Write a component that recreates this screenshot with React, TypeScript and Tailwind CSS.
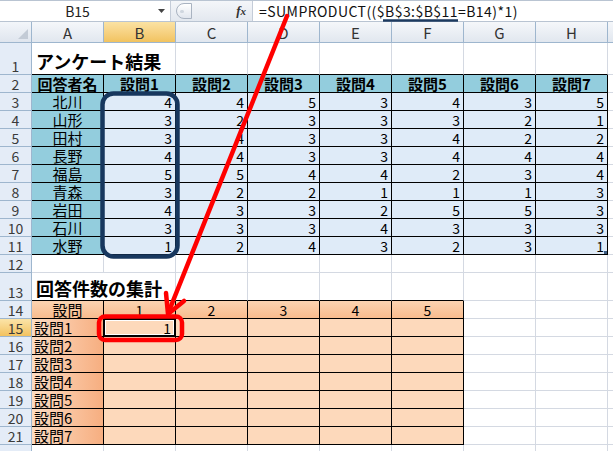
import React from "react";

const FONT = { fontFamily: "'Noto Sans CJK JP', 'Noto Sans', sans-serif" };

const grid = "border-[#d4d9e2]";
const COLS = ["A", "B", "C", "D", "E", "F", "G", "H"];

const data: [string, number[]][] = [
  ["北川", [4, 4, 5, 3, 4, 3, 5]],
  ["山形", [3, 2, 3, 3, 3, 2, 1]],
  ["田村", [3, 4, 3, 3, 4, 2, 2]],
  ["長野", [4, 4, 3, 3, 4, 4, 4]],
  ["福島", [5, 5, 4, 4, 2, 3, 4]],
  ["青森", [3, 2, 2, 1, 1, 1, 3]],
  ["岩田", [4, 3, 3, 2, 5, 5, 3]],
  ["石川", [3, 3, 3, 4, 3, 3, 3]],
  ["水野", [1, 2, 4, 3, 2, 3, 1]],
];

function RowHead({ n, h, sel }: { n: number; h: string; sel?: boolean }) {
  return (
    <div
      className={`w-[32px] shrink-0 ${h} border-r border-b border-[#9eb6ce] flex items-end justify-center pb-[1px] text-[14px] leading-none text-[#3a3a3a] ${
        sel ? "bg-linear-to-b from-[#fbe4a8] to-[#f3c25e]" : "bg-[#e4ecf7]"
      }`}
    >
      {n}
    </div>
  );
}

function Row({ children, h }: { children: React.ReactNode; h: string }) {
  return <div className={`flex ${h}`}>{children}</div>;
}

function Empty({ b }: { b?: string }) {
  return <div className={`w-[72px] shrink-0 border-r border-b ${grid} ${b ?? ""}`} />;
}

function Rest() {
  return <div className={`flex-1 border-b ${grid}`} />;
}

export default function App() {
  return (
    <div className="relative w-[613px] h-[451px] overflow-hidden bg-white" style={FONT}>
      {/* formula bar */}
      <div className="flex h-[22px] border-t border-b border-[#b9c4d2] bg-white">
        <div className="w-[170px] flex items-center">
          <div className="w-[155px] text-center text-[14px] leading-none text-[#222]">B15</div>
          <svg width="9" height="6" viewBox="0 0 9 6" className="ml-[2px]">
            <path d="M1 1 L8 1 L4.5 5 Z" fill="#444" />
          </svg>
        </div>
        <div className="w-[82px] flex items-center bg-linear-to-b from-[#f4f6f9] to-[#e3e8ef] border-l border-[#c4ccd8]">
          <div className="ml-[5px] w-[16px] h-[16px] rounded-l-full border border-[#a9b3c1] bg-linear-to-b from-white to-[#e1e6ee] flex items-center justify-start pl-[3px]">
            <div className="w-[4px] h-[3px] rounded-full bg-[#cfd6df]" />
          </div>
          <div className="ml-auto mr-[6px] text-[13px] italic font-bold text-[#333]" style={{ fontFamily: "'Liberation Serif', serif" }}>
            f<span className="text-[11px]">x</span>
          </div>
        </div>
        <div className="flex-1 flex items-center border-l border-[#c4ccd8] pl-[6px] text-[14px] leading-none text-[#111] tracking-[0.45px]">
          =SUMPRODUCT(($B$3:$B$11=B14)*1)
        </div>
      </div>

      {/* column headers */}
      <div className="flex h-[21px]">
        <div className="w-[32px] shrink-0 border-r border-b border-[#9eb6ce] bg-linear-to-b from-[#f3f6fa] to-[#dfe5ee] relative">
          <svg width="10" height="10" className="absolute right-[3px] bottom-[3px]">
            <path d="M10 0 L10 10 L0 10 Z" fill="#c3cbd6" />
          </svg>
        </div>
        {COLS.map((c) => (
          <div
            key={c}
            className={`w-[72px] shrink-0 border-r border-b border-[#9eb6ce] flex items-center justify-center text-[15px] leading-none text-[#333] ${
              c === "B" ? "bg-linear-to-b from-[#fbe2a3] to-[#f2c35f]" : "bg-linear-to-b from-[#f5f7fa] to-[#e1e7ef]"
            }`}
          >
            {c}
          </div>
        ))}
        <div className="flex-1 border-b border-[#9eb6ce] bg-linear-to-b from-[#f5f7fa] to-[#e1e7ef]" />
      </div>

      {/* row 1 */}
      <Row h="h-[32px]">
        <RowHead n={1} h="h-[32px]" />
        <div className="w-[144px] shrink-0 border-r border-b border-r-[#d4d9e2] border-b-black flex items-end pl-[4px] pb-[4px] text-[18px] font-bold leading-none text-black whitespace-nowrap">
          アンケート結果
        </div>
        {COLS.slice(2).map((c) => (
          <Empty key={c} b="border-b-black" />
        ))}
        <Rest />
      </Row>

      {/* row 2 header */}
      <Row h="h-[18px]">
        <RowHead n={2} h="h-[18px]" />
        <div className="w-[72px] shrink-0 border-r border-b border-black bg-[#93cddd] flex items-center justify-center text-[15px] font-bold leading-none">
          回答者名
        </div>
        {[1, 2, 3, 4, 5, 6, 7].map((i) => (
          <div
            key={i}
            className="w-[72px] shrink-0 border-r border-b border-black bg-[#93cddd] flex items-center justify-center text-[15px] font-bold leading-none"
          >
            設問{i}
          </div>
        ))}
        <Rest />
      </Row>

      {data.map(([name, vals], r) => (
        <Row key={name} h="h-[18px]">
          <RowHead n={r + 3} h="h-[18px]" />
          <div className="w-[72px] shrink-0 border-r border-b border-black bg-[#93cddd] flex items-center justify-center text-[15px] leading-none">
            {name}
          </div>
          {vals.map((v, i) => (
            <div
              key={i}
              className="relative w-[72px] shrink-0 border-r border-b border-black bg-[#dfebf8] flex items-center justify-end pr-[3px] text-[14px] leading-none"
            >
              {v}
              {r === 8 && i === 6 && <div className="absolute right-0 bottom-0 w-[3px] h-[3px] bg-[#3b5a80]" />}
            </div>
          ))}
          <Rest />
        </Row>
      ))}

      {/* row 12 */}
      <Row h="h-[18px]">
        <RowHead n={12} h="h-[18px]" />
        {COLS.map((c) => (
          <Empty key={c} />
        ))}
        <Rest />
      </Row>

      {/* row 13 */}
      <Row h="h-[28px]">
        <RowHead n={13} h="h-[28px]" />
        <div className="w-[144px] shrink-0 border-r border-b border-r-[#d4d9e2] border-b-black flex items-end pl-[4px] pb-[3px] text-[18px] font-bold leading-none text-black whitespace-nowrap">
          回答件数の集計
        </div>
        {COLS.slice(2).map((c, i) => (
          <Empty key={c} b={i < 4 ? "border-b-black" : ""} />
        ))}
        <Rest />
      </Row>

      {/* row 14 */}
      <Row h="h-[18px]">
        <RowHead n={14} h="h-[18px]" />
        <div className="w-[72px] shrink-0 border-r border-b border-black bg-linear-to-b from-[#fbd3b1] to-[#f8bc8e] flex items-center justify-center text-[15px] leading-none">
          設問
        </div>
        {[1, 2, 3, 4, 5].map((i) => (
          <div
            key={i}
            className="w-[72px] shrink-0 border-r border-b border-black bg-linear-to-b from-[#fbd3b1] to-[#f8bc8e] flex items-center justify-center text-[14px] leading-none"
          >
            {i}
          </div>
        ))}
        <Empty />
        <Empty />
        <Rest />
      </Row>

      {[1, 2, 3, 4, 5, 6, 7].map((q) => (
        <Row key={q} h="h-[18px]">
          <RowHead n={q + 14} h="h-[18px]" sel={q === 1} />
          <div className="w-[72px] shrink-0 border-r border-b border-black bg-linear-to-r from-[#fcdcc2] to-[#f6ae80] flex items-center pl-[2px] text-[15px] leading-none">
            設問{q}
          </div>
          {[1, 2, 3, 4, 5].map((i) => (
            <div
              key={i}
              className="relative w-[72px] shrink-0 border-r border-b border-black bg-[#fdd9bb] flex items-center justify-end pr-[4px] text-[14px] leading-none"
            >
              {q === 1 && i === 1 && (
                <>
                  <div className="absolute inset-[-1px] border-2 border-black" />
                  <div className="absolute inset-[1px] border border-white" />
                  <span className="relative">1</span>
                </>
              )}
            </div>
          ))}
          <Empty />
          <Empty />
          <Rest />
        </Row>
      ))}

      {/* row 22 */}
      <Row h="h-[10px]">
        <div className="w-[32px] shrink-0 h-[10px] border-r border-[#9eb6ce] bg-[#e4ecf7]" />
        {COLS.map((c) => (
          <div key={c} className={`w-[72px] shrink-0 border-r ${grid}`} />
        ))}
      </Row>

      {/* annotations */}
      <svg className="absolute left-0 top-0 pointer-events-none" width="613" height="451" viewBox="0 0 613 451">
        <line x1="383" y1="20.5" x2="458" y2="20.5" stroke="#1d3a5f" strokeWidth="2.5" />
        <rect x="102.5" y="93.5" width="75" height="163" rx="11" fill="none" stroke="#17375e" strokeWidth="4.5" />
        <rect x="99" y="316.5" width="83" height="23.5" rx="6" fill="none" stroke="#ff0000" strokeWidth="4.5" />
        <line x1="287" y1="16" x2="169" y2="311" stroke="#ff0000" strokeWidth="4.5" strokeLinecap="round" />
        <polyline points="166,293 168,314 184,301" fill="none" stroke="#ff0000" strokeWidth="4.5" strokeLinecap="round" strokeLinejoin="round" />
      </svg>
    </div>
  );
}
